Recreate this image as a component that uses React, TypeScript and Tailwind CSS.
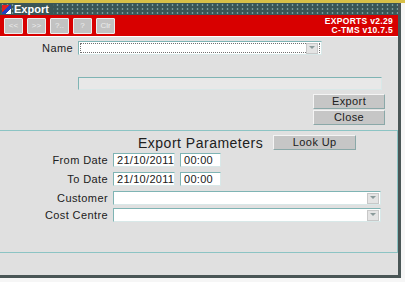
import React from 'react';

const font = { fontFamily: '"Liberation Sans", Arial, sans-serif' };

function Arrow() {
  return (
    <div className="flex h-[11px] w-[12px] items-center justify-center border border-[#c8c8c8] bg-[#e4e4e4]">
      <svg width="6" height="4" viewBox="0 0 6 4">
        <path d="M0 0 L6 0 L3 3 Z" fill="#8a9a9a" />
      </svg>
    </div>
  );
}

function ToolButton({ label }: { label: string }) {
  return (
    <div className="flex h-[16px] w-[19px] items-center justify-center rounded-[1px] border border-[#ececec] bg-[#c2c2c2] text-[8px] leading-none text-[#ececec]">
      {label}
    </div>
  );
}

function GrayButton({ label, width }: { label: string; width: string }) {
  return (
    <div
      className={`flex h-[15px] ${width} items-center justify-center border border-t-[#f4f4f4] border-l-[#f4f4f4] border-r-[#8aa8a8] border-b-[#8aa8a8] bg-[#c6c6c6] text-[11px] leading-none tracking-[0.4px] text-[#202020]`}
    >
      {label}
    </div>
  );
}

function Field({ value, width }: { value?: string; width: string }) {
  return (
    <div
      className={`flex h-[14px] ${width} items-center border border-[#7fb4b4] border-r-[#d8e8e8] border-b-[#d8e8e8] bg-white pl-[3px] text-[11px] leading-none tracking-[0.3px] text-[#202020]`}
    >
      {value}
    </div>
  );
}

function Combo({ width }: { width: string }) {
  return (
    <div
      className={`flex h-[14px] ${width} items-center justify-end border border-[#7fb4b4] border-r-[#d8e8e8] border-b-[#d8e8e8] bg-white pr-[1px]`}
    >
      <Arrow />
    </div>
  );
}

function Label({ text }: { text: string }) {
  return <div className="text-right text-[11px] leading-[14px] tracking-[0.4px] text-[#202020]">{text}</div>;
}

export default function App() {
  return (
    <div className="relative h-[282px] w-[405px] overflow-hidden bg-[#f6f6f6]" style={font}>
      <div className="h-[3px] bg-[#d8c048]" />
      <div className="flex w-[401px]">
        <div className="w-[398px]">
          {/* title bar */}
          <div className="flex h-[12px] items-center bg-[#3a5656] bg-[radial-gradient(circle,#7a9a9a_0.7px,transparent_1.2px)] bg-[length:5px_4px]">
            <div className="ml-[2px] h-[9px] w-[9px] bg-[linear-gradient(135deg,#e02020_0%,#e02020_40%,#2040c0_41%,#2040c0_70%,#ffffff_71%)]" />
            <span className="ml-[3px] bg-[#3a5656] pr-[4px] text-[11px] font-bold leading-none text-white">Export</span>
          </div>
          {/* red tool band */}
          <div className="flex h-[21px] items-center justify-between bg-[#d80000] pl-[4px] pr-[5px]">
            <div className="flex gap-[4px]">
              <ToolButton label="<<" />
              <ToolButton label=">>" />
              <ToolButton label="?.." />
              <ToolButton label="?" />
              <ToolButton label="Clr" />
            </div>
            <div className="flex flex-col items-end text-[8.5px] font-bold leading-[9px] tracking-[0.3px] text-white">
              <span>EXPORTS v2.29</span>
              <span>C-TMS v10.7.5</span>
            </div>
          </div>
          <div className="h-px bg-white" />
          {/* body */}
          <div className="h-[238px] bg-[#e0e0e0] pt-[4px]">
            <div className="flex h-[14px] items-center">
              <div className="w-[73px] text-right text-[11px] leading-none tracking-[0.4px] text-[#202020]">Name</div>
              <div className="ml-[5px] flex h-[14px] w-[244px] items-center justify-end border border-[#7fb4b4] border-r-[#d8e8e8] border-b-[#d8e8e8] bg-white p-[1px]">
                <div className="flex h-full flex-1 items-center justify-end border border-dotted border-[#707070] pr-[1px]">
                  <Arrow />
                </div>
              </div>
            </div>
            <div className="ml-[78px] mt-[22px] h-[13px] w-[304px] border border-[#7fb4b4] border-r-[#d8e8e8] border-b-[#d8e8e8] bg-[#e8e8e8]" />
            <div className="ml-[313px] mt-[4px] flex flex-col gap-px">
              <GrayButton label="Export" width="w-[72px]" />
              <GrayButton label="Close" width="w-[72px]" />
            </div>
            {/* parameters frame */}
            <div className="mt-[5px] h-[123px] w-[398px] border-t border-r border-b border-[#8cc4c4] pt-[4px]">
              <div className="flex h-[15px] items-center">
                <span className="ml-[138px] text-[14px] leading-none tracking-[0.5px] text-[#202020]">Export Parameters</span>
                <div className="ml-[10px]">
                  <GrayButton label="Look Up" width="w-[83px]" />
                </div>
              </div>
              <div className="mt-[3px] grid grid-cols-[108px_auto] items-center gap-x-[5px] gap-y-[5px]">
                <Label text="From Date" />
                <div className="flex gap-[5px]">
                  <Field value="21/10/2011" width="w-[62px]" />
                  <Field value="00:00" width="w-[41px]" />
                </div>
                <Label text="To Date" />
                <div className="flex gap-[5px]">
                  <Field value="21/10/2011" width="w-[62px]" />
                  <Field value="00:00" width="w-[41px]" />
                </div>
                <Label text="Customer" />
                <Combo width="w-[268px]" />
                <div className="-mt-[2px]">
                  <Label text="Cost Centre" />
                </div>
                <div className="-mt-[2px]">
                  <Combo width="w-[268px]" />
                </div>
              </div>
            </div>
          </div>
          <div className="h-[3px] bg-[#4a5656]" />
        </div>
        <div className="w-[3px] bg-[#4a5656]" />
      </div>
    </div>
  );
}
